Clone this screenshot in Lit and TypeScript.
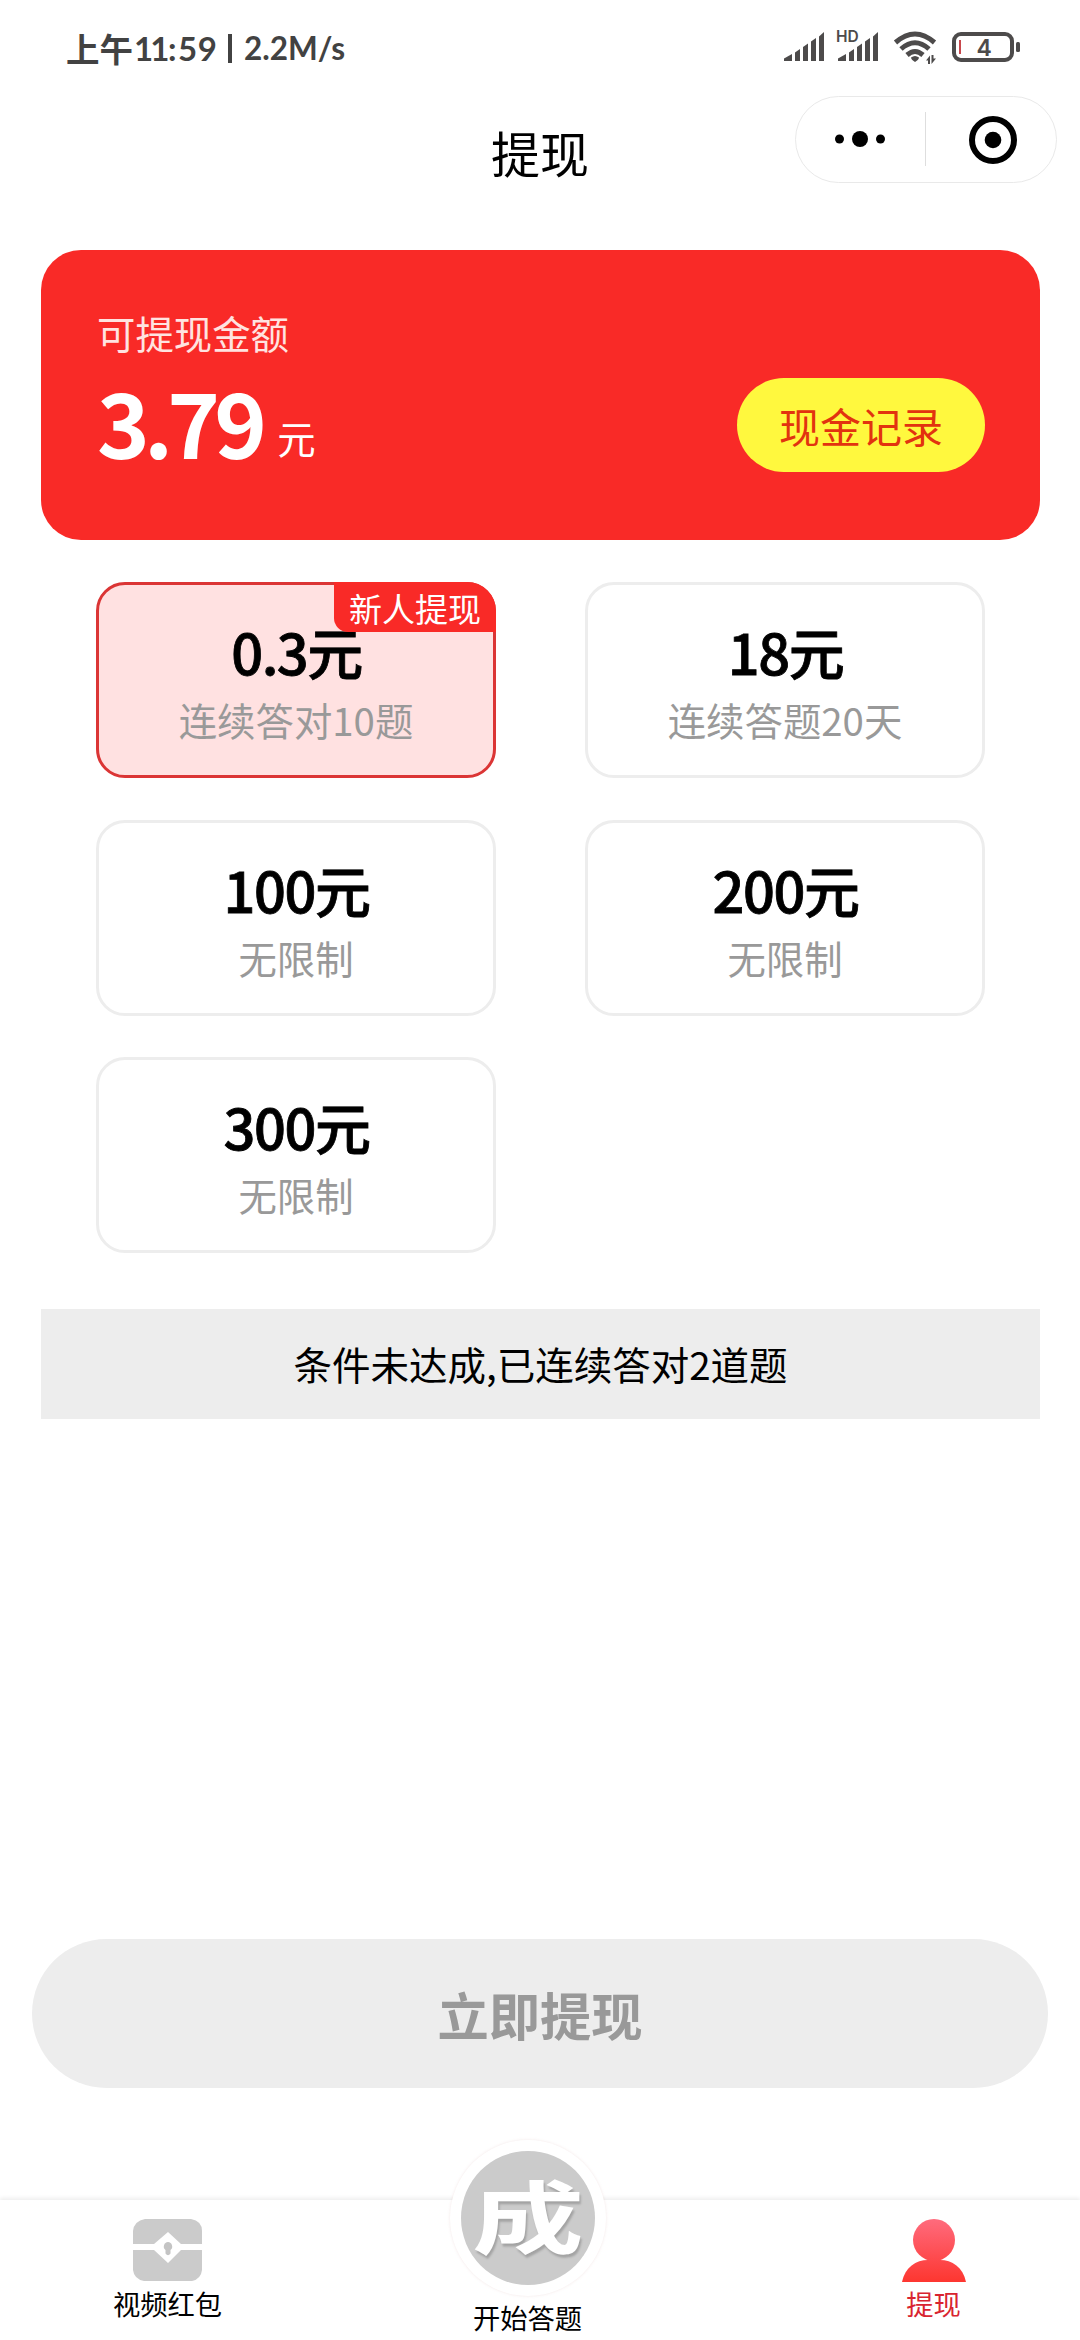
import { LitElement, html, css, svg } from 'lit';
import { customElement, property } from 'lit/decorators.js';

interface CashOption {
  amount: string;
  hint: string;
  tag?: string;
}

const OPTIONS: CashOption[] = [
  { amount: '0.3', hint: '连续答对10题', tag: '新人提现' },
  { amount: '18', hint: '连续答题20天' },
  { amount: '100', hint: '无限制' },
  { amount: '200', hint: '无限制' },
  { amount: '300', hint: '无限制' },
];

const signalBars = svg`
  <path d="M0 29V26.5L8 22V29Z" />
  <path d="M11 29V20.5L16 17V29Z" />
  <path d="M19 29V15L24 11.5V29Z" />
  <path d="M27 29V9.5L32 6V29Z" />
  <path d="M35 29V4.5L40 0V29Z" />
`;

@customElement('status-bar')
export class StatusBar extends LitElement {
  static styles = css`
    :host {
      display: flex;
      justify-content: space-between;
      height: 96px;
      padding: 0 58px 0 66px;
      box-sizing: border-box;
      color: #424242;
    }

    .left {
      display: flex;
      align-items: center;
      height: 96px;
      font-family: Lato, 'Noto Sans CJK SC', sans-serif;
      font-weight: 700;
      font-size: 33px;
      line-height: 96px;
      white-space: nowrap;
    }

    .period {
      width: 68px;
      font-family: 'Noto Sans CJK SC', sans-serif;
      font-size: 33.5px;
      line-height: 92px;
    }

    .hour {
      width: 34px;
      letter-spacing: -2.8px;
    }

    .colon {
      width: 10px;
    }

    .minute {
      width: 41px;
      letter-spacing: 0.5px;
    }

    .divider {
      width: 4px;
      height: 29px;
      margin: 0 12px 0 9px;
      background: #424242;
    }

    .speed {
      font-size: 31.5px;
    }

    .icons {
      display: block;
      width: 238px;
      height: 96px;
    }

    .hd {
      font: 600 15.5px Inter, sans-serif;
    }

    .level {
      font: 600 23px Inter, sans-serif;
    }
  `;

  render() {
    return html`
      <div class="left">
        <span class="period">上午</span>
        <span class="hour">11</span>
        <span class="colon">:</span>
        <span class="minute">59</span>
        <span class="divider"></span>
        <span class="speed">2.2M/s</span>
      </div>
      <svg class="icons" viewBox="784 0 238 96" fill="#4d4b4b">
        <g transform="translate(784 32)">${signalBars}</g>
        <g transform="translate(838 32)">
          ${signalBars}
          <path d="M-3 -4H21V10L11 16V20H-3Z" fill="#fff" />
        </g>
        <text class="hd" x="836" y="42">HD</text>
        <g fill="none" stroke="#4d4b4b" stroke-width="5">
          <path d="M895.5 42.5Q915 25.5 934.5 42.5" />
          <path d="M901 49Q915 36.5 929 49" />
          <path d="M907 55Q915 48 923 55" />
        </g>
        <path d="M911 57.5Q915 54.5 919 57.5Q919 59.5 915 62Q911 59.5 911 57.5Z" />
        <path d="M926 60.5L930 55.5V64H928V60.5Z M931.5 55H933.5V58.5H936L931.5 64Z" />
        <rect x="954" y="34" width="58" height="26" rx="7" fill="none" stroke="#4d4b4b" stroke-width="4" />
        <rect x="1016" y="42" width="4" height="10" rx="1.5" />
        <rect x="959" y="40" width="2" height="14" fill="#c8474c" />
        <text class="level" x="976.5" y="56">4</text>
      </svg>
    `;
  }
}

@customElement('cash-option')
export class CashOptionCard extends LitElement {
  static styles = css`
    :host {
      display: block;
    }

    .card {
      position: relative;
      height: 196px;
      padding-top: 25px;
      box-sizing: border-box;
      border: 3px solid #ededed;
      border-radius: 29px;
      text-align: center;
    }

    .active {
      background: #ffe1e1;
      border-color: #db3535;
    }

    .amount {
      padding-left: 1px;
      font-size: 56px;
      font-weight: 500;
      line-height: 82px;
      letter-spacing: -1.5px;
      color: #000;
      -webkit-text-stroke: 0.8px #000;
    }

    .hint {
      font-size: 38.4px;
      line-height: 54px;
      color: #999;
    }

    .tag {
      position: absolute;
      top: -3px;
      right: -3px;
      width: 162px;
      height: 50px;
      border-radius: 0 29px 0 14px;
      background: #f92a27;
      color: #fff;
      font-size: 33px;
      line-height: 52px;
    }
  `;

  @property({ type: Object })
  option!: CashOption;

  render() {
    const { amount, hint, tag } = this.option;
    return html`
      <div class="card ${tag ? 'active' : ''}">
        <div class="amount">${amount}元</div>
        <div class="hint">${hint}</div>
        ${tag ? html`<div class="tag">${tag}</div>` : ''}
      </div>
    `;
  }
}

@customElement('app-root')
export class AppRoot extends LitElement {
  static styles = css`
    :host {
      display: flex;
      flex-direction: column;
      width: 1080px;
      height: 2340px;
      overflow: hidden;
      background: #fff;
      color: #000;
      font-family: 'Noto Sans CJK SC', sans-serif;
    }

    .title-bar {
      display: grid;
      grid-template-columns: 1fr auto 1fr;
      height: 154px;
    }

    .title {
      grid-column: 2;
      font-size: 49px;
      line-height: 112px;
    }

    .capsule {
      justify-self: end;
      width: 262px;
      height: 87px;
      margin-right: 23px;
    }

    .balance {
      display: flex;
      justify-content: space-between;
      height: 290px;
      margin: 0 40px 0 41px;
      padding: 54px 55px 0 56px;
      box-sizing: border-box;
      border-radius: 40px;
      background: #f92a27;
      color: #fff;
    }

    .balance-label {
      font-size: 38.4px;
      line-height: 56px;
      color: #ffe3e0;
    }

    .balance-value {
      display: flex;
      align-items: flex-start;
      gap: 16px;
      line-height: 121px;
    }

    .number {
      font-size: 89.5px;
      font-weight: 700;
      letter-spacing: -5.8px;
    }

    .unit {
      padding-top: 17px;
      font-size: 38.4px;
    }

    .record {
      width: 248px;
      height: 94px;
      margin-top: 74px;
      border: none;
      padding: 0;
      border-radius: 47px;
      background: #fff83e;
      color: #e2330f;
      font-family: inherit;
      font-size: 41px;
      line-height: 94px;
      text-align: center;
    }

    .options {
      display: grid;
      grid-template-columns: 400px 400px;
      column-gap: 89px;
      row-gap: 41.5px;
      padding: 42px 0 0 96px;
    }

    .notice {
      height: 110px;
      margin: 56px 40px 0 41px;
      background: #ededed;
      font-size: 38.5px;
      line-height: 108px;
      text-align: center;
    }

    .submit {
      height: 149px;
      margin: 520px 32px 0;
      border: none;
      border-radius: 75px;
      background: #ededed;
      color: #999;
      font-family: inherit;
      font-size: 51.3px;
      font-weight: 700;
      line-height: 143px;
    }

    .tabs {
      display: flex;
      height: 140px;
      margin-top: auto;
      padding-left: 113px;
      box-sizing: border-box;
      box-shadow: 0 -2px 4px rgba(0, 0, 0, 0.07);
    }

    .tab {
      display: flex;
      flex-direction: column;
      align-items: center;
      width: 109px;
      padding-top: 19px;
      font-size: 27.3px;
      line-height: 40px;
      white-space: nowrap;
    }

    .tab svg {
      display: block;
      margin-bottom: 1px;
    }

    .tab-center {
      margin: -60px 297px 0 251px;
      padding-top: 0;
    }

    .tab-active {
      color: #d92430;
    }

    .ring {
      display: flex;
      width: 156px;
      height: 156px;
      box-sizing: border-box;
      padding: 11px;
      border-radius: 50%;
      background: #fff;
      box-shadow: 0 0 3px rgba(190, 120, 120, 0.18);
      margin-bottom: 1px;
    }

    .seal {
      width: 134px;
      height: 134px;
      border-radius: 50%;
      background: #cbcbcb;
      color: #fff;
      font-size: 86px;
      font-weight: 700;
      line-height: 126px;
      text-align: center;
      text-shadow: 1px 3px 2px rgba(0, 0, 0, 0.2);
    }

    .seal-char {
      display: block;
      transform: scale(1.3, 0.92);
    }
  `;

  render() {
    return html`
      <status-bar></status-bar>
      <header class="title-bar">
        <div class="title">提现</div>
        <svg class="capsule" viewBox="0 0 262 87">
          <rect x="0.5" y="0.5" width="261" height="86" rx="43" fill="#fff" stroke="#e9e9e9" />
          <path d="M130.5 16V70" stroke="#dedede" />
          <circle cx="44.5" cy="43" r="4.5" />
          <circle cx="65" cy="43" r="8" />
          <circle cx="85.5" cy="43" r="4.5" />
          <circle cx="198" cy="44" r="21" fill="none" stroke="#000" stroke-width="6" />
          <circle cx="198" cy="44" r="8.3" />
        </svg>
      </header>

      <section class="balance">
        <div>
          <div class="balance-label">可提现金额</div>
          <div class="balance-value">
            <span class="number">3.79</span>
            <span class="unit">元</span>
          </div>
        </div>
        <button class="record">现金记录</button>
      </section>

      <section class="options">
        ${OPTIONS.map((item) => html`<cash-option .option=${item}></cash-option>`)}
      </section>

      <div class="notice">条件未达成,已连续答对2道题</div>
      <button class="submit">立即提现</button>

      <nav class="tabs">
        <div class="tab">
          <svg width="70" height="63" viewBox="0 0 70 63">
            <path
              d="M12 0H58Q69 2 69 12V25H48L35 13L21 25H0V12Q1 2 12 0Z M0 31H21L35 44L48 31H69V51Q68 60 59 62H11Q1 60 0 51Z"
              fill="#cbcbcb"
            />
            <path d="M35 23A4.5 4.5 0 0 1 37.5 31V34.5Q35 38 32.5 34.5V31A4.5 4.5 0 0 1 35 23Z" fill="#c4c4c4" />
          </svg>
          视频红包
        </div>
        <div class="tab tab-center">
          <div class="ring">
            <div class="seal"><span class="seal-char">成</span></div>
          </div>
          开始答题
        </div>
        <div class="tab tab-active">
          <svg width="64" height="63" viewBox="0 0 64 63">
            <defs>
              <linearGradient id="user" gradientUnits="userSpaceOnUse" x1="0" y1="0" x2="0" y2="63">
                <stop offset="0" stop-color="#ff6b7d" />
                <stop offset="1" stop-color="#fd3630" />
              </linearGradient>
            </defs>
            <circle cx="32" cy="21" r="21" fill="url(#user)" />
            <path d="M0 63C3 48 14 41 26 41H38C50 41 61 48 64 63Z" fill="url(#user)" />
          </svg>
          提现
        </div>
      </nav>
    `;
  }
}

declare global {
  interface HTMLElementTagNameMap {
    'status-bar': StatusBar;
    'cash-option': CashOptionCard;
    'app-root': AppRoot;
  }
}
